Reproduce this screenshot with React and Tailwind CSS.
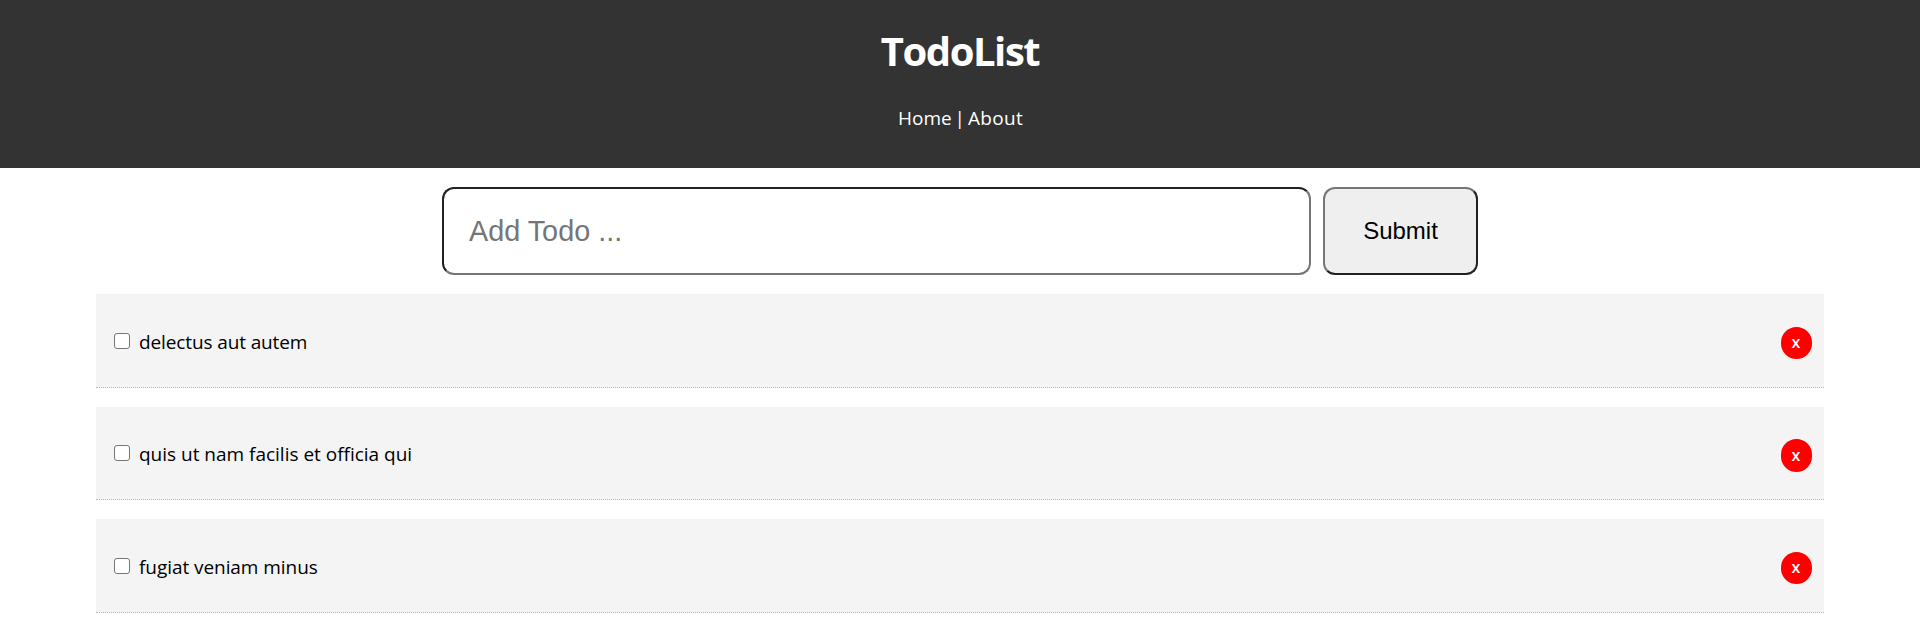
const todos = [
  { id: 1, title: 'delectus aut autem', row: 'h-[94px] pt-[7px]', text: 'tracking-[-0.12px]', button: 'h-8 leading-[30px]' },
  { id: 2, title: 'quis ut nam facilis et officia qui', row: 'h-[93px] pt-1.5', text: 'tracking-[-0.01px]', button: 'h-[33px] leading-8' },
  { id: 3, title: 'fugiat veniam minus', row: 'h-[94px] pt-[7px]', text: 'tracking-[-0.06px]', button: 'h-8 leading-[30px]' },
];

function Header() {
  return (
    <header className="flex h-[168px] flex-col items-center bg-[#333] text-white">
      <h1 className="mt-[22px] text-[40px] leading-[58px] font-bold tracking-[-1.45px]"><span>TodoList</span></h1>
      <nav className="mt-6 pl-px text-[19px] leading-7 [word-spacing:-2px]">
        <a>Home</a> | <a className="tracking-[0.3px]">About</a>
      </nav>
    </header>
  );
}

function AddTodo() {
  return (
    <form className="mt-[19px] ml-[442px] flex h-[88px] gap-3 font-['Liberation_Sans',Arial,sans-serif]">
      <input
        type="text"
        placeholder="Add Todo ..."
        className="w-[869px] rounded-xl border-2 border-t-[#212121] border-r-[#767676] border-b-[#767676] border-l-[#212121] bg-white px-[25px] pt-0.5 text-[28.8px] placeholder:text-[#757575]"
      />
      <button
        type="button"
        className="w-[155px] rounded-xl border-2 border-t-[#767676] border-r-[#212121] border-b-[#212121] border-l-[#767676] bg-[#efefef] text-2xl text-black"
      >
        Submit
      </button>
    </form>
  );
}

function TodoItem({ todo }) {
  return (
    <li className={`flex items-start border-b border-dotted border-[#b8b8b8] bg-[#f4f4f4] pr-3 pl-[18px] ${todo.row}`}>
      <input
        type="checkbox"
        className="mt-8 size-4 shrink-0 appearance-none rounded-[3px] border border-[#767676] bg-white"
      />
      <span className={`mt-[27px] ml-[9px] grow text-[19px] leading-7 ${todo.text}`}>{todo.title}</span>
      <button
        type="button"
        className={`mt-[26px] w-[31px] rounded-full bg-[#f00] pr-px pb-0.5 text-[16px] font-semibold text-white ${todo.button}`}
      >
        x
      </button>
    </li>
  );
}

export default function App() {
  return (
    <div className="h-[622px] overflow-hidden bg-white font-['Open_Sans','Noto_Sans',sans-serif] text-black">
      <Header />
      <AddTodo />
      <ul className="mx-24 mt-[19px] flex flex-col gap-[19px]">
        {todos.map((todo) => (
          <TodoItem key={todo.id} todo={todo} />
        ))}
      </ul>
    </div>
  );
}
